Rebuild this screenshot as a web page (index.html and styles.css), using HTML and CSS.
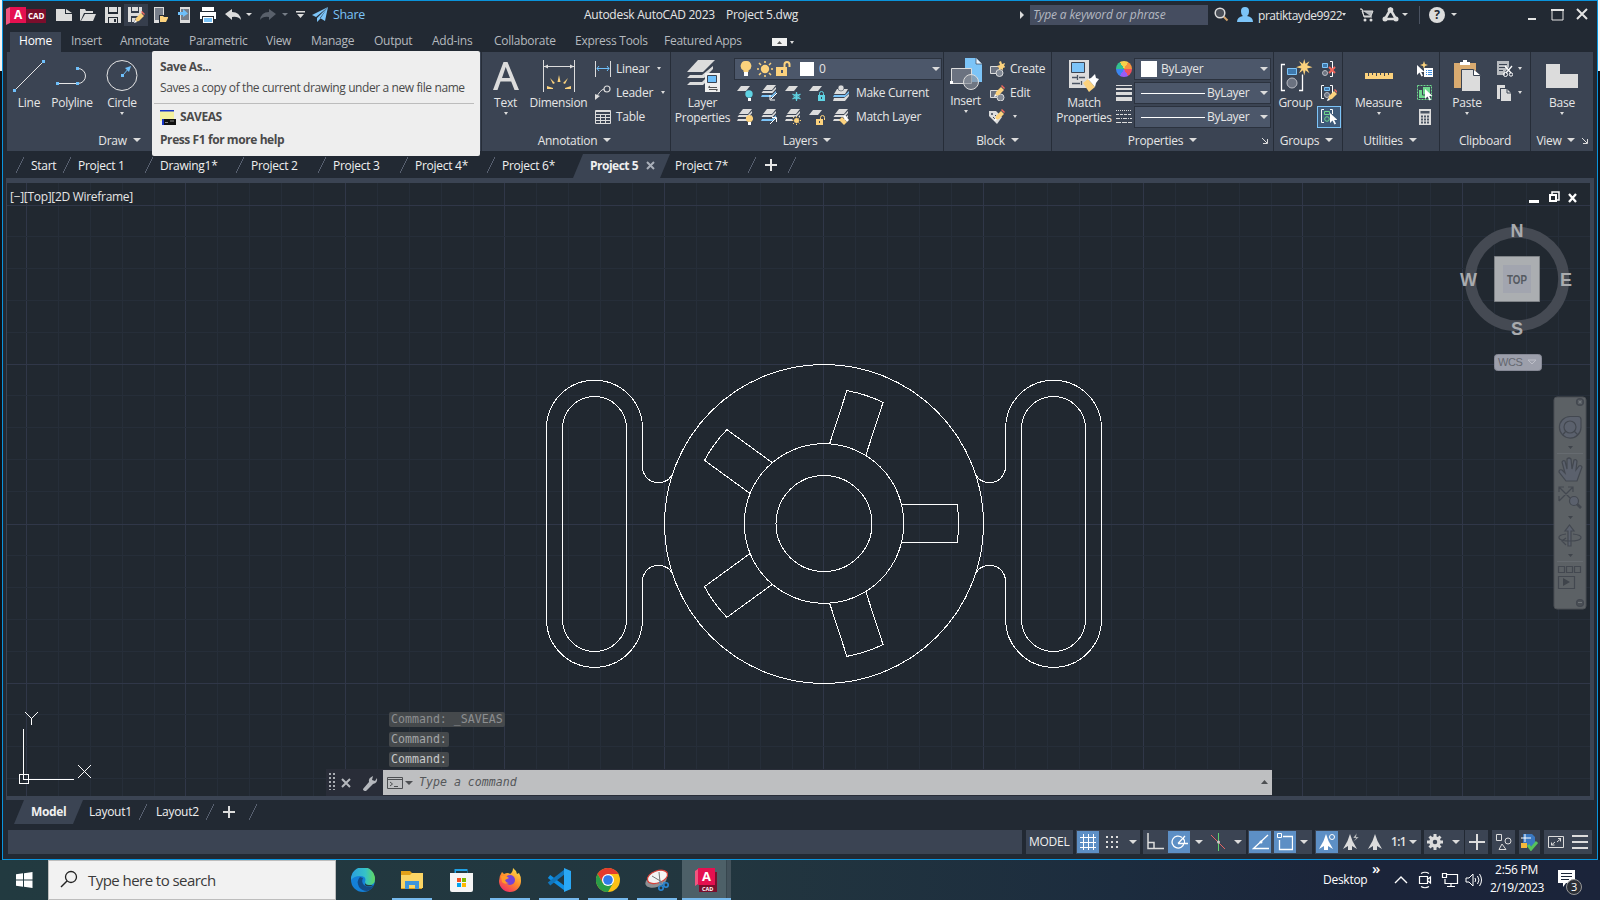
FILE: index.html
```html
<!DOCTYPE html>
<html lang="en">
<head>
<meta charset="utf-8">
<title>Autodesk AutoCAD 2023 - Project 5.dwg</title>
<link rel="stylesheet" href="styles.css">
</head>
<body>
<svg width="0" height="0" class="defs">
  <defs>
    <g id="sheets"><path d="M6 0h9l-4 5H2z" fill="#dcdcdc"/><path d="M2 6h9l4-4v2l-3.500 4H.500zM1 10h10l4-4v2l-3.500 4H0z" fill="#dcdcdc"/></g>
    <g id="sheetsBlue"><path d="M6 0h9l-4 5H2z" fill="#dcdcdc"/><path d="M2 6h9l4-4v2l-3.500 4H.500z" fill="#dcdcdc"/><path d="M1 10h10l4-4v2l-3.500 4H0z" fill="#7cc4f8"/></g>
    <path id="sheet" d="M4 1h9L9 6H0z" fill="#dcdcdc"/>
    <g id="pencil"><path d="M8 9l5-5 3 3-5 5-4 1z" fill="#fcd27d"/><path d="M13 3l1-1 3 3-1 1z" fill="#f2665c"/><path d="M7 11l-1 3 3-1z" fill="#fff"/></g>
    <path id="cursor" d="M0 0v10l2.500-2.500 2 4 1.500-.8-1.800-3.700H7.500z" fill="#fff"/>
    <path id="burst" d="M11 0l1.700 6.300L18 3l-3.200 5.300L22 11l-7.200 1.700L18 19l-5.300-4L11 22l-1.700-7L4 19l3.200-6.300L0 11l7.200-2.700L4 3l5.300 3.300z" fill="#fcd27d"/>
    <path id="annoA" d="M8 0l2.500 7L15 15l-5-3v4H6v-4l-5 3 4.500-8z"/>
  </defs>
</svg>

<div class="desk">
<div class="edge"></div>
<main class="window">

<header class="titlebar">
  <svg class="logo" width="40" height="18"><path d="M0 2l4-2v16l-4 2z" fill="#f2557f"/><path d="M20 2h20v14H20z" fill="#7b0e2c"/><path d="M4 0h16v16H4z" fill="#e51050"/><text x="8" y="12" class="lgA">A</text><text x="22" y="12" class="lgC">CAD</text></svg>
  <svg width="16" height="14"><path d="M0 1h9v5h7v7H0zM10 1l6 4h-6z" fill="#dcdcdc"/></svg>
  <svg width="16" height="14"><path d="M0 13V1h5l1 2h7v2H4L1 12z" fill="#dcdcdc"/><path d="M5 6h11l-3 7H1z" fill="#dcdcdc"/></svg>
  <svg width="16" height="16"><path d="M0 0h3v7h10V0h3v16h-3v-6H3v6H0z" fill="#dcdcdc"/><path d="M4 0h8v5H4zM4 11h8v5H4z" fill="#dcdcdc"/><path d="M9 12h2v3H9z" fill="#222933"/></svg>
  <span class="qatOn"><svg width="17" height="16"><path d="M0 0h3v6h8V0h3v6l-3 3H3v6H0z" fill="#dcdcdc"/><path d="M4 0h6v4H4z" fill="#dcdcdc"/><path d="M4 11h4l-2 4H4z" fill="#dcdcdc"/><use href="#pencil" y="2"/></svg></span>
  <svg width="16" height="16"><path d="M1 0h10v8H6v8H1z" fill="#dcdcdc"/><path d="M2 1h8v7H6v5H2z" fill="#777e8a"/><path d="M7 15V9h3l1 1h4v1l-2 4z" fill="#fcd27d"/></svg>
  <svg width="14" height="16"><path d="M2 0h10v16H2z" fill="#dcdcdc"/><path d="M3 2h8v11H3z" fill="#777e8a"/><path d="M0 5h5V2l5 4.500L5 10V8H0z" fill="#6fc0fb"/></svg>
  <svg width="16" height="16"><path d="M2 0h12v4H2zM0 5h16v7h-2V9H2v3H0z" fill="#fff"/><path d="M3 10h10v6H3z" fill="#fff"/><path d="M4 11h8v4H4z" fill="#7cc4f8"/></svg>
  <svg width="16" height="12"><path d="M0 5l7-5v3q8 0 9 8-3-4-9-3v3z" fill="#dcdcdc"/></svg>
  <i class="car"></i>
  <svg width="16" height="12"><path d="M16 5L9 0v3q-8 0-9 8 3-4 9-3v3z" fill="#59606b"/></svg>
  <i class="car dim"></i>
  <svg width="9" height="8"><path d="M0 0h9v1.500H0zM1 3h7L4.500 7z" fill="#dcdcdc"/></svg>
  <svg width="17" height="15"><path d="M16 0L0 8l4 2zM16 0L5 11v4l3-3zM16 0l-3 14-5-3z" fill="#7cc4f8"/></svg>
  <span class="share">Share</span>
  <span class="t1">Autodesk AutoCAD 2023</span>
  <span class="t2">Project 5.dwg</span>
  <svg width="6" height="8"><path d="M1 0l4 4-4 4z" fill="#dcdcdc"/></svg>
  <span class="keyword">Type a keyword or phrase</span>
  <svg width="15" height="15"><path d="M9.500 9.500l4 4" stroke="#d2a36b" stroke-width="2"/><circle cx="6" cy="6" r="4.800" fill="#4a4f58" stroke="#dcdcdc" stroke-width="1.500"/></svg>
  <svg width="16" height="16"><path d="M4 4a4 4 0 0 1 8 0q0 4-2 5 6 1 6 6H0q0-5 6-6-2-1-2-5" fill="#7cc4f8"/></svg>
  <span class="user">pratiktayde9922</span>
  <i class="car sm"></i>
  <svg width="14" height="14"><path d="M0 1h2l2 8h8M2 3h11l-2 5H4z" fill="#b9bcc0" stroke="#dcdcdc"/><circle cx="5" cy="12" r="1.500" fill="#dcdcdc"/><circle cx="11" cy="12" r="1.500" fill="#dcdcdc"/></svg>
  <svg width="17" height="15"><path d="M8.500 2.500L3 12h11z" fill="none" stroke="#dcdcdc" stroke-width="2.500"/><circle cx="8.500" cy="3" r="2.800" fill="#dcdcdc"/><circle cx="3" cy="12" r="2.500" fill="#dcdcdc"/><circle cx="14" cy="12" r="2.500" fill="#dcdcdc"/></svg>
  <i class="car"></i>
  <i class="vr"></i>
  <span class="help">?</span>
  <i class="car"></i>
  <svg width="12" height="12"><path d="M0 9h8v2H0z" fill="#e4e4e4"/></svg>
  <svg width="13" height="12"><path d="M1 1h11v10H1z" fill="none" stroke="#e4e4e4"/><path d="M0 0h13v2H0z" fill="#e4e4e4"/></svg>
  <svg width="12" height="13"><path d="M1 1l10 10M11 1L1 11" stroke="#e4e4e4" stroke-width="2"/></svg>
</header>

<nav class="tabs">
  <span class="on">Home</span><span>Insert</span><span>Annotate</span><span>Parametric</span><span>View</span><span>Manage</span><span>Output</span><span>Add-ins</span><span>Collaborate</span><span>Express Tools</span><span>Featured Apps</span>
  <svg width="15" height="8"><path d="M0 0h15v8H0z" fill="#f0f0f0"/><path d="M5 6h5L7.500 3z" fill="#555"/></svg><i class="car sm"></i>
</nav>

<section class="ribbon">
  <section class="panel draw">
    <div class="body">
      <div class="big"><svg width="32" height="32"><path d="M2 30L30 2" stroke="#e6e6e6"/><path d="M0 29h3v3H0zM29 0h3v3h-3z" fill="#6fc0fb"/></svg><b>Line</b></div>
      <div class="big"><svg width="32" height="32"><path d="M2 23.500h20a7.500 7.500 0 0 0 0-15" fill="none" stroke="#e6e6e6"/><path d="M0 22h3v3H0zM20 22h3v3h-3zM20 7h3v3h-3z" fill="#6fc0fb"/></svg><b>Polyline</b></div>
      <div class="big"><svg width="32" height="32"><circle cx="16" cy="15.500" r="15" fill="none" stroke="#e6e6e6"/><path d="M15 14h3v3h-3zM19 8l6-2-2 6z" fill="#6fc0fb"/><path d="M17 15l6-7" stroke="#6fc0fb"/></svg><b>Circle</b><i class="car sm"></i></div>
    </div>
    <footer>Draw<i class="car lg"></i></footer>
  </section>
  <section class="panel anno">
    <div class="body">
      <div class="big"><svg width="32" height="32"><path fill-rule="evenodd" d="M3 30L13.500 2h4L29 30h-4.500l-3.300-8.500H10.500L7.500 30zM12 18h8L15.700 7z" fill="#dcdcdc"/></svg><b>Text</b><i class="car sm"></i></div>
      <div class="big"><svg width="32" height="32"><path d="M.500 0v32M31.500 0v32M1 6.500h30" stroke="#dcdcdc"/><path d="M1 6.500l4-2v4zM31 6.500l-4-2v4z" fill="#dcdcdc"/><path d="M14.500 22l1.500-7 1.500 7zM10 24l-3-6 5 5zM22 24l3-6-5 5zM4 29l0-3 6 2v1zM28 29l0-3-6 2v1z" fill="#fcd27d"/></svg><b>Dimension</b></div>
      <div class="list">
        <svg width="16" height="16"><path d="M.500 0v16M15.500 0v16" stroke="#dcdcdc"/><path d="M2 7.500h12M4 5L2 7.500 4 10M12 5l2 2.500-2 2.500" fill="none" stroke="#6fc0fb"/></svg><span>Linear<i class="car sm"></i></span>
        <svg width="16" height="16"><path d="M1 13Q5 5 9 4" fill="none" stroke="#dcdcdc"/><circle cx="12" cy="4" r="3" fill="none" stroke="#dcdcdc" stroke-width="1.200"/><path d="M0 15l0-6 5 2z" fill="#dcdcdc"/></svg><span>Leader<i class="car sm"></i></span>
        <svg width="16" height="14"><path d="M.500 .500h15v13H.500zM0 1.500h16M0 4.500h16M0 7.500h16M0 10.500h16M5.500 4v10M10.500 4v10" fill="none" stroke="#dcdcdc"/></svg><span>Table</span>
      </div>
    </div>
    <footer>Annotation<i class="car lg"></i></footer>
  </section>
  <section class="panel layers">
    <div class="body">
      <div class="big"><svg width="34" height="32"><path d="M12 0h17L17 12H1z" fill="#dcdcdc"/><path d="M4 15h12l11-9v3l-9 9H1zM4 22h12l4-4v4l-3 3H1z" fill="#dcdcdc"/><path d="M19 13h15v19H19z" fill="#eee"/><path d="M21.500 15.500h9v7h-9z" fill="#6fc0fb" stroke="#3b4453"/><path d="M23 27.500h8M23 29.500h8M24 26l-2 1.500M30 31l2-1.500" stroke="#555"/></svg><b>Layer<br>Properties</b></div>
      <div class="lay">
        <div class="drop"><svg width="16" height="16"><path d="M8 0a5 5 0 0 1 2.500 9.500V11h-5V9.500A5 5 0 0 1 8 0" fill="#fcd27d"/><path d="M6 11h4v4H6z" fill="#fff"/></svg>
          <svg width="16" height="16"><circle cx="8" cy="8" r="4.200" fill="#fcd27d"/><path d="M8 0v2M8 14v2M0 8h2M14 8h2M2 2l2 2M12 12l2 2M2 14l2-2M12 4l2-2" stroke="#fcd27d" stroke-width="1.500"/></svg>
          <svg width="16" height="16"><path fill-rule="evenodd" d="M0 6h11v9H0zM5 9v3h2V9z" fill="#fcd27d"/><path d="M8.500 6V3.500a2.500 2.500 0 0 1 5 0V6" fill="none" stroke="#fcd27d" stroke-width="2"/></svg>
          <i class="sw"></i><span>0</span><i class="car lg"></i></div>
        <div class="rowi">
          <svg width="16" height="16"><use href="#sheet"/><circle cx="12" cy="9" r="3.700" fill="#5fd3e3"/><path d="M11 13h3v3h-3z" fill="#fff"/></svg>
          <svg width="16" height="16"><use href="#sheetsBlue"/><path d="M16 8l-6 6M9 10v5h5" stroke="#fff" fill="none"/></svg>
          <svg width="16" height="16"><use href="#sheet"/><path d="M11.500 7v9M7.500 9l8 5M7.500 14l8-5" stroke="#5fd3e3" stroke-width="1.200"/><circle cx="11.500" cy="11.500" r="2.500" fill="none" stroke="#5fd3e3"/></svg>
          <svg width="16" height="16"><use href="#sheet"/><path d="M9 10h7v6H9z" fill="#5fd3e3"/><path d="M10.500 10V8.500a2 2 0 0 1 4 0V10" fill="none" stroke="#5fd3e3"/><path d="M12 12h1v2h-1z" fill="#3b4453"/></svg>
          <svg width="16" height="16"><path d="M4 4h11l-3 5H1zM1 13h10l5-4v2l-4 5H0z" fill="#dcdcdc"/><path d="M1 10h11l4-4v2l-4 4H0z" fill="#7cc4f8"/><circle cx="8" cy="3" r="3" fill="#dcdcdc" stroke="#3b4453" stroke-width=".6"/></svg>
          <span>Make Current</span>
          <svg width="16" height="16"><use href="#sheets"/><circle cx="12.500" cy="9.500" r="3.600" fill="#fcd27d"/><path d="M11 13h3v3h-3z" fill="#fff"/></svg>
          <svg width="16" height="16"><use href="#sheetsBlue"/><path d="M9 15l6-6M11 8.500h4.500V13" stroke="#fff" fill="none"/></svg>
          <svg width="16" height="16"><use href="#sheets"/><circle cx="11.500" cy="11.500" r="4.200" fill="#3b4453"/><circle cx="11.500" cy="11.500" r="2.500" fill="#fcd27d"/><path d="M11.500 7v9M7 11.500h9M8 8l7 7M8 15l7-7" stroke="#fcd27d" stroke-dasharray="1.300 6.400"/></svg>
          <svg width="16" height="16"><use href="#sheet"/><path fill-rule="evenodd" d="M7 10h7v6H7zM10 12v2h1v-2z" fill="#fcd27d"/><path d="M11.500 10V8.500a2 2 0 0 1 4 0V11" fill="none" stroke="#fcd27d"/></svg>
          <svg width="16" height="16"><use href="#sheets"/><path d="M6 11l3-3 5 5-3 3z" fill="#fcd27d"/><path d="M10 8l2-2 4 5-2 2z" fill="#fff"/></svg>
          <span>Match Layer</span>
        </div>
      </div>
    </div>
    <footer>Layers<i class="car lg"></i></footer>
  </section>
  <section class="panel block">
    <div class="body">
      <div class="big up"><svg width="32" height="32"><path d="M15 0h11l6 6v18H15z" fill="#7cc4f8"/><path d="M26 0v6h6" fill="#e8f4ff" stroke="#3b4453" stroke-width=".7"/><path d="M1.500 10.500h20v15h-20z" fill="#6b7280" stroke="#dcdcdc"/><circle cx="21" cy="24" r="7.500" fill="#8a909baa" stroke="#dcdcdc"/><path d="M0 23h3v3H0z" fill="#fff"/></svg><b>Insert</b><i class="car sm"></i></div>
      <div class="list">
        <svg width="16" height="16"><path d="M1.500 5.500h9v7h-9z" fill="#6b7280" stroke="#dcdcdc"/><circle cx="10.500" cy="12" r="3.500" fill="#808793" stroke="#dcdcdc"/><path d="M12 0l1 3 3-1-1 3 2 1-3 1v2l-2-1-2 1v-2L8 5l3-1-1-3z" fill="#fcd27d"/></svg><span>Create</span>
        <svg width="16" height="16"><path d="M1.500 5.500h9v7h-9z" fill="#6b7280" stroke="#dcdcdc"/><circle cx="11.500" cy="12.500" r="3.500" fill="#808793" stroke="#dcdcdc"/><use href="#pencil" y="-2" x="-1"/></svg><span>Edit</span>
        <svg width="16" height="16"><path d="M0 2h7l6 6-5 7-8-8z" fill="#dcdcdc"/><circle cx="3" cy="5" r="1" fill="#3b4453"/><path d="M4 8l3 3M6 6l2 2" stroke="#3b4453"/><use href="#pencil" y="-2" x="-1"/></svg><span><i class="car sm"></i></span>
      </div>
    </div>
    <footer>Block<i class="car lg"></i></footer>
  </section>
  <section class="panel props">
    <div class="body">
      <div class="big"><svg width="32" height="32"><path d="M1 0h20v28H1z" fill="#dcdcdc"/><path d="M3.500 2.500h13v10h-13z" fill="#7cc4f8" stroke="#3b4453"/><path d="M4 17.500h5M11 17.500h6M4 23.500h8M9.500 15v5M13.500 21v4" stroke="#4b5563" stroke-width="1.300"/><path d="M15 23l5-4 7 8-6 5z" fill="#fcd27d"/><path d="M20 19l3-1 4-4 1 4 3 1-3 4-1 4z" fill="#fff"/></svg><b>Match<br>Properties</b></div>
      <div class="plist">
        <i class="wheel"></i><div class="drop"><i class="sw"></i><span>ByLayer</span><i class="car lg"></i></div>
        <svg width="16" height="16"><path d="M0 0h16v1H0zM0 3h16v2H0zM0 7h16v3H0zM0 12h16v4H0z" fill="#dcdcdc"/></svg><div class="drop"><i class="ln"></i><span>ByLayer</span><i class="car lg"></i></div>
        <svg width="16" height="16"><path d="M0 1.500h16" stroke="#dcdcdc" stroke-dasharray="1 1"/><path d="M0 5.500h16" stroke="#dcdcdc" stroke-dasharray="3 1"/><path d="M0 9.500h16" stroke="#dcdcdc" stroke-dasharray="4 1 1 1"/><path d="M0 13.500h16" stroke="#dcdcdc" stroke-dasharray="5 1"/></svg><div class="drop"><i class="ln"></i><span>ByLayer</span><i class="car lg"></i></div>
      </div>
    </div>
    <footer>Properties<i class="car lg"></i><svg class="launch" width="6" height="6"><path d="M0 0l5 5M5.500 1v4.500H1" stroke="#dcdcdc" fill="none"/></svg></footer>
  </section>
  <section class="panel groups">
    <div class="body">
      <div class="big"><svg width="34" height="34"><path d="M5 5.500H1.500v26H5M19 31.500h3.500v-16" fill="none" stroke="#fff" stroke-width="1.300"/><path d="M7.500 9.500h9v6h-9z" fill="#3f79ad" stroke="#7cc4f8"/><circle cx="12" cy="24" r="5" fill="#6b7280" stroke="#b9bcc4"/><use href="#burst" transform="translate(16 0) scale(.75)"/></svg><b>Group</b></div>
      <div class="icons">
        <svg width="16" height="16"><path d="M1.500 2.500h5v4h-5z" fill="#3f79ad" stroke="#7cc4f8"/><circle cx="4" cy="12" r="2.500" fill="#6b7280" stroke="#b9bcc4"/><path d="M9 .500h2.500v15H9" fill="none" stroke="#fff"/><path d="M8 6l6 6M14 6l-6 6" stroke="#f2665c" stroke-width="2"/></svg>
        <svg width="16" height="16"><path d="M3 .500H.500v13H3M9 .500h2.500V8" fill="none" stroke="#fff"/><path d="M3.500 2.500h5v3h-5z" fill="#3f79ad" stroke="#7cc4f8"/><circle cx="6" cy="10" r="2.500" fill="#6b7280" stroke="#b9bcc4"/><use href="#pencil" y="2"/></svg>
        <span class="gsel"><svg width="16" height="16"><path d="M3 .500H.500v13H3M9 .500h2.500V5" fill="none" stroke="#fff"/><path d="M3.500 2.500h5v3h-5z" fill="none" stroke="#6fd98e"/><circle cx="6" cy="10" r="2.300" fill="none" stroke="#6fd98e"/><use href="#cursor" x="9" y="4"/></svg></span>
      </div>
    </div>
    <footer>Groups<i class="car lg"></i></footer>
  </section>
  <section class="panel utils">
    <div class="body">
      <div class="big"><svg width="28" height="32"><path d="M0 13h28v6H0z" fill="#fcd27d"/><path d="M3.500 13v3M7.500 13v2M11.500 13v3M15.500 13v2M19.500 13v3M23.500 13v2" stroke="#3b4453"/></svg><b>Measure</b><i class="car sm"></i></div>
      <div class="icons">
        <svg width="16" height="16"><path d="M7 0l1 3 3 1-3 1-1 3-1-3-3-1 3-1z" fill="#fcd27d"/><use href="#cursor" y="4"/><path d="M7 7h9v9H7z" fill="#fff"/><path d="M9 9.500h1M9 11.500h1M9 13.500h1M11 9.500h4M11 11.500h4M11 13.500h4" stroke="#3f8fe0"/></svg>
        <svg width="16" height="16"><path d="M.500 .500h14v14H.500z" fill="none" stroke="#6fd98e" stroke-dasharray="2 1"/><path d="M2 5h4V2h7v8H9v3H2z" fill="#6fd98e"/><path d="M5.500 5v5h5" fill="none" stroke="#3b4453"/><use href="#cursor" x="8" y="4"/></svg>
        <svg width="12" height="16"><path d="M0 0h12v16H0z" fill="#dcdcdc"/><path d="M1.500 2h9v2.500h-9z" fill="#4b5563"/><path d="M2 7.500h8M2 10.500h8M2 13.500h8" stroke="#4b5563" stroke-width="2" stroke-dasharray="2 1"/></svg>
      </div>
    </div>
    <footer>Utilities<i class="car lg"></i></footer>
  </section>
  <section class="panel clip">
    <div class="body">
      <div class="big"><svg width="27" height="32"><path d="M0 3h22v25H0z" fill="#d9ab70"/><path d="M6 2h3V0h4v2h3v3H6z" fill="#fff"/><path d="M7.500 9.500h12l7 6v16h-19z" fill="#dcdcdc" stroke="#3b4453"/><path d="M19.500 9.500v6h7" fill="#fff" stroke="#3b4453"/></svg><b>Paste</b><i class="car sm"></i></div>
      <div class="list">
        <svg width="16" height="16"><path fill-rule="evenodd" d="M0 0h12v6l-4 5v3H0zM2 3v1h8V3zM2 6v1h6V6zM2 9v1h4V9z" fill="#b9bcc0"/><path d="M8 5l6 7M15 5l-6 7" stroke="#fff" stroke-width="1.300"/><circle cx="8.500" cy="13.500" r="2" fill="none" stroke="#fff"/><circle cx="14" cy="13.500" r="1.700" fill="none" stroke="#fff"/></svg><span><i class="car sm"></i></span>
        <svg width="14" height="16"><path d="M0 0h8v3H3v11H0z" fill="#dcdcdc"/><path d="M4 4h6l4 4v8H4z" fill="#dcdcdc"/><path d="M10 3v5h4" fill="none" stroke="#3b4453"/></svg><span><i class="car sm"></i></span>
      </div>
    </div>
    <footer>Clipboard</footer>
  </section>
  <section class="panel view">
    <div class="body">
      <div class="big"><svg width="32" height="32"><path d="M0 4h14v10h18v14H0z" fill="#dcdcdc"/></svg><b>Base</b><i class="car sm"></i></div>
    </div>
    <footer>View<i class="car lg"></i><svg class="launch" width="6" height="6"><path d="M0 0l5 5M5.500 1v4.500H1" stroke="#dcdcdc" fill="none"/></svg></footer>
  </section>
</section>

<nav class="files">
  <span>Start</span><span>Project 1</span><span>Drawing1*</span><span>Project 2</span><span>Project 3</span><span>Project 4*</span><span>Project 6*</span>
  <span class="cur">Project 5<svg width="9" height="9"><path d="M1 1l7 7M8 1L1 8" stroke="#a9afb9" stroke-width="2"/></svg></span>
  <span class="nos">Project 7*</span><span class="add"><svg width="12" height="12"><path d="M6 0v12M0 6h12" stroke="#e6e6e6" stroke-width="2"/></svg></span><span></span>
</nav>

<section class="canvas">
  <svg class="model" width="1583" height="613" viewBox="7 183 1583 613">
    <defs>
      <g id="gv"><path class="minor" d="M32.500 183v613M64.500 183v613M96.500 183v613M128.500 183v613"/><path class="major" d="M.500 183v613"/></g>
      <g id="gh"><path class="minor" d="M7 31.500h1583M7 63.500h1583M7 95.500h1583M7 127.500h1583"/><path class="major" d="M7 .500h1583"/></g>
      <path id="tab" d="M901 504.500H957.200A135.200 135.200 0 0 1 957.200 542.500H901"/>
      <g id="slot"><path d="M642.500 466.700V428.300A48 48 0 0 0 546.500 428.300V619.300A48 48 0 0 0 642.500 619.300V581A16 16 0 0 1 672.500 573.500M642.500 466.700A16 16 0 0 0 672.500 474.500"/><rect x="562.500" y="396.500" width="64" height="255" rx="32"/></g>
    </defs>
    <use href="#gv" x="26"/><use href="#gv" x="185"/><use href="#gv" x="345"/><use href="#gv" x="504"/><use href="#gv" x="664"/><use href="#gv" x="823"/><use href="#gv" x="983"/><use href="#gv" x="1143"/><use href="#gv" x="1302"/><use href="#gv" x="1462"/>
    <use href="#gh" y="205"/><use href="#gh" y="364"/><use href="#gh" y="524"/><use href="#gh" y="683"/>
    <g class="geo">
      <circle cx="824" cy="524" r="159.500"/><circle cx="824" cy="523.500" r="79.800"/><circle cx="824" cy="523.500" r="48"/>
      <use href="#tab"/><use href="#tab" transform="rotate(72 823.700 523.500)"/><use href="#tab" transform="rotate(144 823.700 523.500)"/><use href="#tab" transform="rotate(216 823.700 523.500)"/><use href="#tab" transform="rotate(288 823.700 523.500)"/>
      <use href="#slot"/><use href="#slot" transform="translate(1648 0) scale(-1 1)"/>
      <path d="M23.500 729v50.500h50M19.500 774.500h9v9h-9zM25 712l6.500 6.500M38 712l-6.500 6.500V725M78 765l13 13M91 765l-13 13"/>
    </g>
  </svg>
  <span class="vp">[−][Top][2D Wireframe]</span>
  <svg class="mdi" width="54" height="14"><path d="M1 9h10v3H1z" fill="#fff"/><path d="M24 3V1h7v8h-2" fill="none" stroke="#fff" stroke-width="1.500"/><path d="M22 4h6v6h-6z" fill="none" stroke="#fff" stroke-width="2"/><path d="M41 3l7 8M48 3l-7 8" stroke="#fff" stroke-width="2.300"/></svg>
  <svg class="cube" width="120" height="160" viewBox="1457 219 120 160"><circle cx="1517" cy="279" r="46.700" fill="none" stroke="#454a53" stroke-width="11"/><path d="M1494.500 256.500h45v45h-45z" fill="#abaeb1" stroke="#7e8286"/><path d="M1503 265h28v28h-28z" fill="#a2a5af"/><text class="top" x="0" y="0" transform="translate(1517 283.500) scale(.78 1)">TOP</text><g class="nsew"><text x="1517" y="236.500">N</text><text x="1517" y="334.500">S</text><text x="1468.500" y="285.500">W</text><text x="1566" y="285.500">E</text></g><rect x="1494.500" y="354.500" width="47" height="16" rx="3" fill="#9c9fab" stroke="#868995"/><text class="wcs" x="1498" y="366">WCS</text><path d="M1528 360h8l-4 4z" fill="none" stroke="#bcbec7"/></svg>
  <svg class="navbar" width="34" height="214" viewBox="1553 396 34 214"><rect x="1554" y="397" width="32" height="212" rx="3" fill="#5c6165" stroke="#4b4f54"/><g fill="none" stroke="#434850" stroke-width="1.200"><circle cx="1580" cy="402" r="3.500" fill="#4a4f55"/><circle cx="1580" cy="603" r="3.500" fill="#4a4f55"/><path d="M1578.500 400.500l3 3M1581.500 400.500l-3 3M1578 602.500h4" stroke="#70757a"/><path d="M1570 416.500h8q3 0 3 3v8a10.800 10.800 0 1 1-11-11z" fill="#5b616d"/><circle cx="1570" cy="427" r="6"/><path d="M1562.500 435l3.500-4M1578 435l-4-4"/><path d="M1566 481l-7-9q0-3 3-2l3 3-3-11q1-2 3-1l2 8V459q2-2 4 0l1 10 2-9q2-1 3 1l-1 9 3-4q2-1 3 1l-5 14z" fill="#5b616d"/><path d="M1559 487l14 14M1573 487l-14 14M1559 492v-5h5M1568 487h5v5M1559 496v5"/><circle cx="1574" cy="501" r="4.500" fill="#5b616d"/><path d="M1577 504l4 4" stroke-width="2.500"/><path d="M1568 546v-15h-3l4.500-6 4.500 6h-3v15z" fill="#5b616d"/><path d="M1566 534q-8 1-7 4t11 3 11-3-8-4M1566 538l-4 3 4 4"/><path d="M1558.500 566.500h6v6h-6zM1566.500 566.500h6v6h-6zM1574.500 566.500h6v6h-6zM1558.500 576.500h16v12h-16z"/></g><path d="M1563 578v8l7-4zM1568 446h5l-2.500 3zM1568 516h5l-2.500 3zM1568 554h5l-2.500 3z" fill="#3f444b"/><path d="M1557 453.500h26M1557 561.500h26" stroke="#666b70"/></svg>
  <div class="cmd">
    <div class="hist"><span class="h1">Command: _SAVEAS</span><span class="h2">Command:</span><span class="h3">Command:</span></div>
    <div class="line">
      <svg width="56" height="26"><path d="M3 4h2v2H3zM7 4h2v2H7zM3 8h2v2H3zM7 8h2v2H7zM3 12h2v2H3zM7 12h2v2H7zM3 16h2v2H3zM7 16h2v2H7zM3 20h2v1H3zM7 20h2v1H7z" fill="#a9adb3"/><path d="M16 10l8 8M24 10l-8 8" stroke="#b5b8bd" stroke-width="2"/><path d="M37 20l6-7q-1-4 4-6l-1 4 3 1 2-3q1 5-4 6l-7 7q-3 0-3-2" fill="#b5b8bd"/></svg>
      <div class="input"><svg width="26" height="14"><path d="M.500 1.500h15v11H.500zM0 3.500h16M3 6l2.500 2L3 10M7 10.500h4" fill="none" stroke="#4d4f52"/><path d="M18 5h8l-4 4z" fill="#4d4f52"/></svg><em>Type a command</em><svg width="8" height="5"><path d="M0 4h7L3.500 0z" fill="#4d4f52"/></svg></div>
    </div>
  </div>
</section>

<nav class="layouts">
  <span class="cur">Model</span><span>Layout1</span><span>Layout2</span><span><svg width="12" height="12"><path d="M6 0v12M0 6h12" stroke="#dcdcdc" stroke-width="2"/></svg></span>
</nav>

<footer class="status">
  <div class="s0"></div>
  <div class="s1">MODEL</div>
  <div class="s2"><span class="a"><svg width="16" height="16"><path d="M3.500 0v16M8.500 0v16M13.500 0v16M0 3.500h16M0 8.500h16M0 13.500h16" stroke="#fff"/></svg></span><span><svg width="14" height="14"><path d="M1 2h12M1 7h12M1 12h12" stroke="#dcdcdc" stroke-width="2" stroke-dasharray="2 3"/></svg></span><i class="car lg"></i></div>
  <div class="s3"><span><svg width="18" height="18"><path d="M2 0v15.500h16M2 9.500h6V16" fill="none" stroke="#dcdcdc" stroke-width="1.500"/></svg></span><span class="a"><svg width="17" height="17"><path d="M13 9a6 6 0 1 1-2-5.500" fill="none" stroke="#fff" stroke-width="1.300"/><path d="M7 9.500h10M7 9.500L14 2M12 4q2 2 1.500 5.500" fill="none" stroke="#fff" stroke-width="1.300"/></svg></span><i class="car lg"></i><span><svg width="16" height="18"><path d="M8.500 0v18" stroke="#5fd06e"/><path d="M1 2l14 14" stroke="#e46565"/><circle cx="8.500" cy="9" r="1.500" fill="#ccc"/></svg></span><i class="car lg"></i></div>
  <div class="s4"><span class="a"><svg width="17" height="16"><path d="M16 1L1.500 14.500H17" fill="none" stroke="#fff" stroke-width="1.300"/><circle cx="9" cy="8" r="1.500" fill="#fff"/></svg></span><span class="a"><svg width="16" height="18"><path d="M6 3.500h9.500v13h-13V7" fill="none" stroke="#fff" stroke-width="1.300"/><path d="M.500 .500h4v4h-4z" fill="none" stroke="#fff"/></svg></span><i class="car lg"></i></div>
  <div class="s5"><span class="a"><svg width="18" height="18"><use href="#annoA" y="1" fill="#fff"/><circle cx="14" cy="4" r="2.500" fill="#5d8fc5" stroke="#fff"/></svg></span><span><svg width="18" height="18"><use href="#annoA" y="1" fill="#dcdcdc"/><path d="M15 0l-4 5h3l-3 4 6-5h-3z" fill="#dcdcdc" stroke="#3b4453" stroke-width=".5"/></svg></span><span><svg width="16" height="18"><use href="#annoA" y="1" fill="#dcdcdc"/></svg></span><b>1:1</b><i class="car lg"></i></div>
  <div class="s6"><span><svg width="16" height="16"><path d="M8 0v16M0 8h16M2.500 2.500l11 11M13.500 2.500l-11 11" stroke="#dcdcdc" stroke-width="3"/><circle cx="8" cy="8" r="4" fill="#3b4453" stroke="#dcdcdc" stroke-width="3.500"/></svg></span><i class="car lg"></i></div>
  <div class="s7"><svg width="16" height="16"><path d="M8 0v16M0 8h16" stroke="#dcdcdc" stroke-width="2"/></svg></div>
  <div class="s8"><svg width="17" height="18"><path d="M1.500 1.500h5v6h-5zM4 16.500l3-5.500 4 5.500z" fill="none" stroke="#dcdcdc"/><circle cx="13" cy="8" r="3" fill="none" stroke="#dcdcdc"/></svg></div>
  <div class="s9"><svg width="18" height="18"><path d="M2 1h9l3 3v9H2z" fill="#3a78c0"/><path d="M0 5h10M4 1v8" stroke="#fff"/><path d="M0 10h6v5H0z" fill="#f5b93a"/><path d="M7 12l3 4 6-7" fill="none" stroke="#56c35c" stroke-width="3"/></svg></div>
  <div class="s10"><svg width="16" height="12"><path d="M.500 .500h15v11H.500z" fill="none" stroke="#dcdcdc"/><path d="M9 6l4-3.500h-3M12.500 3V5.500M7 6L3.500 9h3M3.500 9V6.500" fill="none" stroke="#dcdcdc"/></svg><svg width="16" height="14"><path d="M0 1h16M0 7h16M0 13h16" stroke="#dcdcdc" stroke-width="2"/></svg></div>
</footer>

<aside class="tip">
  <h4>Save As...</h4>
  <p>Saves a copy of the current drawing under a new file name</p>
  <hr>
  <h4 class="cmdn"><svg width="16" height="16"><path d="M0 1h14v11H0z" fill="#f5f2a0"/><path d="M0 1h14v1.500H0z" fill="#1735c8"/><path d="M2 10h14v6H2z" fill="#111"/><path d="M2 10h2v6H2z" fill="#1735c8"/><path d="M5 13.500h3M10 12h4" stroke="#888"/></svg>SAVEAS</h4>
  <h4>Press F1 for more help</h4>
</aside>
</main>
<div class="edge r"></div>
</div>

<footer class="taskbar">
  <svg class="win" width="17" height="16"><path d="M0 2.300L7 1.300V7.500H0zM8 1.200L16.500 0V7.500H8zM0 8.500h7v6.200l-7-1zM8 8.500h8.500V16L8 14.800z" fill="#fff"/></svg>
  <div class="search"><svg width="18" height="18"><circle cx="11" cy="7" r="5.500" fill="none" stroke="#222" stroke-width="1.300"/><path d="M7 11l-6 6" stroke="#222" stroke-width="1.500"/></svg>Type here to search</div>
  <div class="app"><svg width="24" height="24"><defs><linearGradient id="eg"><stop offset="0" stop-color="#2a9fe0"/><stop offset=".6" stop-color="#35c2c8"/><stop offset="1" stop-color="#62d85f"/></linearGradient></defs><circle cx="12" cy="12" r="12" fill="#1480d8"/><path d="M0 11A12 12 0 0 1 24 11q0 6-6 6-5 0-4-3 2-6-5-6Q3 8 0 12" fill="url(#eg)"/><path d="M9 9q-4 4-1 10 3 4 8 4 5-1 7-6-5 4-10 0-3-3-1-7z" fill="#134a86"/><path d="M14 14q0 3 4 3h4q-5 3-8 0z" fill="#223a42"/></svg></div>
  <div class="app run"><svg width="24" height="24"><path d="M1 3h9l2 2h10v16H1z" fill="#e3a21a"/><path d="M1 7l9 0 2-2h11v15H1z" fill="#fbd565"/><path d="M5 13h14v8h-4v-4H9v4H5z" fill="#3d95dc"/></svg></div>
  <div class="app"><svg width="24" height="24"><path d="M6.500 6V2h11v4" fill="none" stroke="#1ea1e6" stroke-width="2"/><path d="M1 5h23v17q0 2-2 2H3q-2 0-2-2z" fill="#f5f5f5"/><path d="M7 3h11v2H7z" fill="#223a42"/><path d="M8 10h4v4H8z" fill="#f25022"/><path d="M13 10h4v4h-4z" fill="#7fba00"/><path d="M8 15h4v4H8z" fill="#00a4ef"/><path d="M13 15h4v4h-4z" fill="#ffb900"/></svg></div>
  <div class="app run"><svg width="24" height="24"><defs><linearGradient id="fg" x1=".8" y1="0" x2=".2" y2="1"><stop offset="0" stop-color="#ffe04a"/><stop offset=".5" stop-color="#ff8a2a"/><stop offset="1" stop-color="#f0286a"/></linearGradient></defs><path d="M15 0q3 2 4 6l2-1q2 3 2 8a11 11 0 0 1-22 0q0-5 3-9l2 2q4-2 6 0 3-2 3-6" fill="url(#fg)"/><circle cx="12" cy="12" r="5" fill="#7542d6"/><path d="M3 8q5-1 8 2l-4 2q1 3 4 3-4 2-7-1z" fill="#ff9a2a"/></svg></div>
  <div class="app run"><svg width="24" height="24"><path d="M2 8.500l16 12" stroke="#0f8fe4" stroke-width="4"/><path d="M2 16L18 3.500" stroke="#1176bd" stroke-width="4"/><path d="M17 0l7 3v18l-7 3z" fill="#2aa8f5"/></svg></div>
  <div class="app run"><svg width="24" height="24"><circle cx="12" cy="12" r="12" fill="#fbc116"/><path d="M1.600 6A12 12 0 0 1 22.400 6H12L6.800 15z" fill="#e33b2e"/><path d="M1.600 6A12 12 0 0 0 12 24l5.200-9H6.800z" fill="#2a9c48"/><circle cx="12" cy="12" r="6" fill="#fff"/><circle cx="12" cy="12" r="4.800" fill="#2f7bea"/></svg></div>
  <div class="app run"><svg width="24" height="24"><ellipse cx="11" cy="13" rx="11" ry="6" transform="rotate(-18 11 13)" fill="#8d9094"/><ellipse cx="12.500" cy="9" rx="10.500" ry="6" transform="rotate(-20 12 9)" fill="#f4f4f4" stroke="#d8423a" stroke-width="1.200"/><path d="M7 8l10 6M14 4l1 10" stroke="#777"/><circle cx="16" cy="20" r="2.200" fill="none" stroke="#2b86d2" stroke-width="1.600"/><circle cx="21" cy="17" r="2.200" fill="none" stroke="#2b86d2" stroke-width="1.600"/><path d="M14 14l4 3 1-3" fill="none" stroke="#2b86d2"/></svg></div>
  <div class="app run act"><svg width="24" height="24"><path d="M1 3l3-2v15l-3 2z" fill="#f2557f"/><path d="M5 4h18v20H5z" fill="#7b0e2c"/><path d="M4 0h17v17H4z" fill="#e51050"/><text x="8" y="13" class="tbA">A</text><text x="8" y="22.500" class="tbC">CAD</text></svg></div>
  <div class="tray">
    <span>Desktop</span><span class="chev">»</span>
    <svg width="14" height="10"><path d="M1 8l6-6 6 6" fill="none" stroke="#fff" stroke-width="1.400"/></svg>
    <svg width="14" height="18"><path d="M3 2.500q4-2.500 8 0M3 15.500q4 2.500 8 0M1.500 5.500h8v7h-8zM10 8l2.500-2v6L10 10" fill="none" stroke="#fff" stroke-width="1.200"/></svg>
    <svg width="18" height="16"><path d="M6 2.500h10.500v9H4V7M10 12v3M6 14.500h8M1.500 1.500h4v4h-4z" fill="none" stroke="#fff" stroke-width="1.200"/></svg>
    <svg width="18" height="16"><path d="M1 6h3l4-4v12l-4-4H1z" fill="none" stroke="#fff"/><path d="M10 6q1.500 2 0 4M12.500 4q3 4 0 8M14.500 2q4 6 0 12" fill="none" stroke="#fff"/></svg>
    <time>2:56 PM<br>2/19/2023</time>
    <div class="note"><svg width="17" height="18"><path d="M0 0h17v13h-9l-3 4v-4H0z" fill="#fff"/><path d="M3 3.500h11M3 6.500h11M3 9.500h8" stroke="#1c2739"/></svg><span>3</span></div>
  </div>
</footer>
</body>
</html>
```

FILE: styles.css
```css
* { box-sizing: border-box; }
body { margin: 0; width: 1600px; height: 900px; overflow: hidden; background: #111519; color: #e6e6e6; font: 12px/15px "Open Sans", "Noto Sans", sans-serif; letter-spacing: -.27px; white-space: nowrap; }
svg { display: block; flex: none; }
i, b, em { font-style: normal; font-weight: normal; }
.defs { position: absolute; }
.desk { display: flex; height: 860px; }
.edge { width: 2px; background: linear-gradient(#f4f4f4 71px, #0d1117 71px); }
.window { position: relative; width: 1596px; height: 860px; background: #222933; border: 1px solid #0a93dc; display: flex; flex-direction: column; }

.car { flex: none; display: block; width: 0; height: 0; border: solid transparent; border-width: 3px 3px 0; border-top-color: #dcdcdc; }
.car.lg { border-width: 4px 4px 0; }
.car.sm { border-width: 3px 2.500px 0; }
.car.dim { border-top-color: #777e88; }

.titlebar { height: 27px; padding-left: 3px; display: grid; align-items: center; grid-template-columns: 50px 24px 25px 19px 29px 25px 22px 25px 21px 14px 22px 14px 16px 21px 251px 142px 293px 11px 184px 23px 21px 84px 18px 22px 20px 17px 10px 22px 77px 23px 25px 1fr; }
.titlebar .logo { margin-top: 2px; }
.lgA { font: 700 12px "Open Sans", sans-serif; fill: #fff; }
.lgC { font: 700 8px "Open Sans", sans-serif; letter-spacing: 0; fill: #fff; }
.qatOn { width: 24px; height: 22px; margin-top: 1px; background: #363e4c; padding: 3px 4px; }
.share { color: #7cc4f8; font-size: 12.400px; }
.t1, .t2 { margin-top: -1px; }
.keyword { width: 178px; height: 20px; margin-top: 1px; padding: 2px 3px; background: #454d60; color: #b4b8c0; font-style: italic; letter-spacing: -.15px; }
.user { margin-top: 1px; letter-spacing: -.45px; }
.vr { width: 1px; height: 18px; background: #4a5261; }
.help { width: 16px; height: 16px; border-radius: 50%; background: #dcdcdc; color: #222933; font: 700 12px/16px "Open Sans", sans-serif; text-align: center; }

.tabs { margin-top: 4px; height: 20px; padding-left: 7px; display: grid; align-items: center; color: #b5b9bf; line-height: 18px; grid-template-columns: 61px 49px 69px 77px 45px 63px 58px 62px 81px 89px 108px 18px 1fr; }
.tabs span { padding-bottom: 2px; }
.tabs .on { width: 51px; height: 20px; text-align: center; background: #3b4453; color: #fff; }

.ribbon { height: 99px; width: 1586px; margin-left: 4px; display: flex; background: #3b4453; }
.panel { border-right: 1px solid #262d38; display: flex; flex-direction: column; }
.panel .body { height: 76px; padding-top: 5px; display: flex; }
.panel footer { position: relative; height: 23px; padding-top: 1px; display: flex; justify-content: center; align-items: center; gap: 6px; line-height: 17px; }
.big { flex: none; height: 71px; padding-top: 3px; display: flex; flex-direction: column; align-items: center; text-align: center; }
.big b { margin-top: 3px; }
.big .car { margin-top: 2px; }
.big.up { padding-top: 1px; }
.list { display: grid; grid-template-rows: repeat(3, 24px); align-items: center; align-content: start; grid-template-columns: 21px 1fr; }
.list span { display: flex; align-items: center; gap: 8px; height: 17px; padding-bottom: 2px; }
.icons { display: grid; grid-template-rows: repeat(3, 24px); align-items: center; justify-items: center; }
.drop { height: 22px; background: #4c576a; border: 1px solid #2b323e; display: flex; align-items: center; }
.drop span { padding-bottom: 2px; }
.drop .car { margin-left: auto; margin-right: 1px; }
.sw { width: 14px; height: 14px; background: #fff; }
.ln { width: 64px; height: 1px; background: #fff; margin: 0 2px 0 6px; }
.launch { position: absolute; right: 5px; bottom: 7px; }

.draw { width: 475px; }
.draw footer { width: 225px; }
.draw .big:nth-child(1) { width: 44px; }
.draw .big:nth-child(2) { width: 42px; }
.draw .big:nth-child(3) { width: 58px; }
.anno { width: 189px; }
.anno .big:nth-child(1) { width: 47px; }
.anno .big:nth-child(2) { width: 59px; }
.anno .list { margin-left: 7px; }
.anno footer { padding-right: 3px; }
.layers { width: 273px; }
.layers .big { width: 63px; }
.lay { width: 208px; }
.lay .drop { width: 208px; margin-top: 1px; padding-left: 3px; }
.lay .drop svg { margin-right: 3px; }
.lay .drop .sw { margin: 0 5px; }
.rowi { display: grid; grid-template-columns: repeat(5, 24px) 1fr; grid-template-rows: 24px 24px; align-items: center; padding-left: 3px; margin-top: 1px; }
.rowi span { padding-bottom: 2px; margin-left: -1px; letter-spacing: -.32px; }
.block { width: 108px; }
.block .big { width: 43px; }
.block .list { margin-left: 2px; }
.block .list .car { margin-left: 3px; }
.props { width: 222px; }
.props .big { width: 64px; }
.plist { display: grid; grid-template-columns: 18px 137px; grid-template-rows: repeat(3, 24px); align-items: center; }
.plist .sw { width: 16px; height: 16px; margin: 0 4px 0 6px; }
.plist .car { margin-right: 2px; }
.wheel { width: 16px; height: 16px; border-radius: 50%; background: conic-gradient(from 30deg, #f6933f 0 60deg, #f0525e 60deg 120deg, #9a5bf5 120deg 180deg, #3b86f0 180deg 240deg, #33c08f 240deg 300deg, #f8d04a 300deg); }
.groups { width: 69px; }
.groups .big { width: 43px; }
.groups .big svg { margin: -1px 0 -1px 2px; }
.gsel { width: 24px; height: 22px; border: 1px solid #7cc4f8; background: #3f5b7a; padding: 2px 3px; }
.groups footer { padding-right: 3px; }
.utils { width: 97px; }
.utils .big { width: 71px; }
.utils .icons { margin-left: 3px; }
.utils footer { padding-right: 2px; }
.clip { width: 91px; }
.clip .big { width: 54px; }
.clip .list { margin-left: 3px; }
.view { width: 62px; border: 0; }
.view .big { width: 62px; }
.view footer { padding-right: 13px; gap: 5px; }

.files { height: 27px; padding-left: 13px; display: grid; grid-template-columns: 47px 82px 91px 82px 82px 87px 86px 96px 79px 40px 1fr; align-items: center; padding-top: 1px; color: #f0f0f0; }
.files span, .layouts span { display: flex; align-items: center; }
.files span::before { content: ""; width: 8px; height: 16px; margin-right: 7px; background: linear-gradient(117deg, transparent 46%, #586070 46%, #586070 54%, transparent 54%); }
.files .nos::before { visibility: hidden; width: 0; margin-right: 6px; }
.files .add::before { margin-right: 9px; }
.files .cur { height: 24px; width: 97px; margin-top: 2px; padding: 0 0 2px 17px; gap: 8px; font-weight: 700; font-size: 12px; letter-spacing: -.5px; background: #3b4453; clip-path: polygon(10px 0, 100% 0, 87px 100%, 0 100%); }
.files .cur::before { display: none; }

.canvas { position: relative; height: 622px; width: 1588px; margin-left: 3px; border: solid #3b4453; border-width: 5px 4px 4px 1px; background: #212830; }
.model { display: block; }
.minor { stroke: #262e39; fill: none; shape-rendering: crispEdges; }
.major { stroke: #303748; fill: none; shape-rendering: crispEdges; }
.geo { fill: none; stroke: #fff; stroke-width: 1; shape-rendering: crispEdges; }
.vp { position: absolute; left: 3px; top: 6px; letter-spacing: -.3px; }
.mdi { position: absolute; left: 1521px; top: 8px; }
.cube { position: absolute; left: 1450px; top: 36px; letter-spacing: 0; }
.cube text { text-anchor: middle; }
.cube .top { font: 700 12.500px "Liberation Sans", sans-serif; fill: #555a61; }
.nsew text { font: 700 18px "Liberation Sans", sans-serif; fill: #a9abae; }
.cube .wcs { font: 11px "Liberation Sans", sans-serif; fill: #64676f; text-anchor: start; letter-spacing: -.4px; }
.navbar { position: absolute; left: 1546px; top: 213px; }
.cmd { position: absolute; left: 319px; bottom: 0; font: 11.600px/15px "DejaVu Sans Mono", monospace; letter-spacing: 0; }
.hist { display: flex; flex-direction: column; align-items: flex-start; gap: 5px; padding-left: 63px; margin-bottom: 2px; }
.hist span { height: 15px; padding: 0 2px; border-radius: 2px; background: #45494c; }
.h1 { color: #8c8e90; }
.h2 { color: #a3a5a7; }
.h3 { color: #c8c9ca; }
.line { display: flex; background: #292d38; height: 27px; width: 946px; }
.line .input { flex: 1; height: 25px; margin: 1px 0 0 1px; background: #bebfc1; display: flex; align-items: center; padding: 0 3px 0 4px; }
.input em { flex: 1; font-style: italic; color: #55575a; margin-left: 6px; }

.layouts { height: 24px; padding-left: 11px; display: grid; grid-template-columns: 75px 67px 67px 34px; align-items: center; color: #f0f0f0; }
.layouts span { padding-bottom: 1px; }
.layouts span::after { content: ""; width: 8px; height: 16px; margin-left: auto; margin-right: 9px; background: linear-gradient(117deg, transparent 46%, #586070 46%, #586070 54%, transparent 54%); }
.layouts span:last-child::after { margin-right: 0; }
.layouts .cur { width: 69px; height: 24px; padding-left: 17px; font-weight: 700; letter-spacing: -.35px; background: #3b4453; clip-path: polygon(10px 0, 100% 0, 59px 100%, 0 100%); }
.layouts .cur::after { display: none; }

.status { margin-top: 6px; height: 24px; padding-left: 5px; display: flex; }
.status > div { background: #3b4453; display: flex; align-items: center; margin-right: 3px; }
.status span { width: 22px; height: 22px; display: flex; align-items: center; justify-content: center; }
.status .a { background: #5d8fc5; }
.status .s0 { width: 1014px; margin-right: 4px; }
.status .s1 { width: 47px; padding: 0 0 2px 3px; color: #f0f0f0; }
.status .s2 { width: 64px; padding-left: 1px; gap: 2px; }
.status .s3 { width: 103px; padding-left: 1px; gap: 2px; margin-right: 2px; }
.status .s3 .car { margin: 0 2px 0 3px; }
.status .s4 { width: 64px; gap: 3px; padding-left: 1px; }
.status .s4 .car { margin-left: 1px; }
.status .s2 .car { margin-left: 4px; }
.status .s5 { width: 106px; padding-left: 1px; gap: 2px; }
.status .s5 b { margin-left: 3px; padding-bottom: 2px; width: 16px; font-weight: 600; font-size: 11.600px; letter-spacing: -.5px; }
.status .s6 { width: 40px; gap: 6px; margin-right: 1px; }
.status .s7 { width: 23px; justify-content: center; margin-right: 4px; }
.status .s8 { width: 23px; justify-content: center; margin-right: 4px; }
.status .s9 { width: 21px; justify-content: center; margin-right: 4px; }
.status .s10 { width: 48px; justify-content: center; gap: 8px; margin: 0; }

.tip { position: absolute; left: 149px; top: 50px; width: 328px; height: 105px; padding: 8px; background: #eeeeee; border-radius: 2px; color: #4a4a4a; }
.tip h4 { margin: 0; font-size: 12px; line-height: 16px; letter-spacing: -.42px; }
.tip p { margin: 5px 0 0; line-height: 16px; letter-spacing: -.4px; }
.tip hr { margin: 7px -2px 5px -6px; border: 0; border-top: 1px solid #bcbcbc; }
.tip .cmdn { display: flex; gap: 4px; margin-bottom: 7px; }

.taskbar { height: 40px; display: flex; background: linear-gradient(90deg, #223a40, #22363f 45%, #1c2c3e 70%, #1b2439 85%, #1b243a); }
.win { margin: 12px 15px 0 16px; }
.search { width: 288px; height: 40px; padding-left: 11px; display: flex; align-items: center; gap: 10px; background: #f2f2f2; border: 1px solid #bdbdbd; color: #3a3a3a; font-size: 15px; letter-spacing: -.55px; }
.search svg { margin-top: -3px; }
.app { width: 40px; height: 40px; margin-left: 9px; padding: 8px; }
.app:nth-of-type(2) { margin-left: 7px; }
.run { border-bottom: 2px solid #76b9ed; }
.app.act { width: 49px; margin-left: 5px; padding-left: 12px; background: linear-gradient(90deg, #4d6068 44px, #2b3a42 44px, #43525b 45px); }
.tbA { font: 700 13px "Open Sans", sans-serif; fill: #fff; }
.tbC { font: 700 5.500px "Open Sans", sans-serif; letter-spacing: 0; fill: #fff; }
.tray { margin-left: auto; width: 277px; display: grid; grid-template-columns: 49px 22px 24px 23px 24px 25px 53px 1fr; align-items: center; color: #fff; }
.tray > span:first-child { margin-top: -2px; }
.chev { font-size: 15px; font-weight: 600; margin-top: -24px; }
.tray time { text-align: center; line-height: 18px; margin-top: -2px; letter-spacing: -.3px; }
.note { position: relative; margin-left: 15px; margin-top: -2px; }
.note span { position: absolute; left: 8px; top: 9px; width: 16px; height: 16px; border: 1px solid #999; border-radius: 50%; background: #2b2f36; font-size: 11px; line-height: 14px; text-align: center; }
```
